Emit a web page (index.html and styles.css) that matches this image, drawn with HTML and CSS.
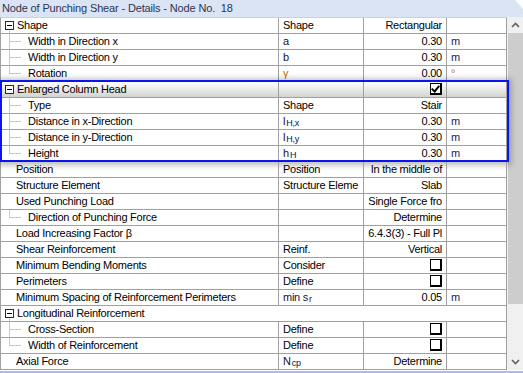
FILE: index.html
```html
<!DOCTYPE html>
<html>
<head>
<meta charset="utf-8">
<link rel="stylesheet" href="styles.css">
</head>
<body>
<div class="win">
  <div class="title">Node of Punching Shear - Details - Node No.&nbsp;&nbsp;18</div>
  <div class="main">
    <div class="grid">
      <div class="row">
        <div class="c1 group focus"><span class="exp"></span>Shape</div>
        <div class="c2">Shape</div><div class="c3">Rectangular</div><div class="c4"></div>
      </div>
      <div class="row">
        <div class="c1 child">Width in Direction x</div>
        <div class="c2 sym">a</div><div class="c3">0.30</div><div class="c4">m</div>
      </div>
      <div class="row">
        <div class="c1 child">Width in Direction y</div>
        <div class="c2 sym">b</div><div class="c3">0.30</div><div class="c4">m</div>
      </div>
      <div class="row">
        <div class="c1 child last">Rotation</div>
        <div class="c2 orange">γ</div><div class="c3">0.00</div><div class="c4 orange">°</div>
      </div>
      <div class="sel-group">
        <div class="row hl">
          <div class="c1 group"><span class="exp"></span>Enlarged Column Head</div>
          <div class="c2"></div><div class="c3"><span class="cb checked"></span></div><div class="c4"></div>
        </div>
        <div class="row">
          <div class="c1 child">Type</div>
          <div class="c2">Shape</div><div class="c3">Stair</div><div class="c4"></div>
        </div>
        <div class="row">
          <div class="c1 child">Distance in x-Direction</div>
          <div class="c2 sym">l<sub>H,x</sub></div><div class="c3">0.30</div><div class="c4">m</div>
        </div>
        <div class="row">
          <div class="c1 child">Distance in y-Direction</div>
          <div class="c2 sym">l<sub>H,y</sub></div><div class="c3">0.30</div><div class="c4">m</div>
        </div>
        <div class="row">
          <div class="c1 child last">Height</div>
          <div class="c2 sym">h<sub>H</sub></div><div class="c3">0.30</div><div class="c4">m</div>
        </div>
        <div class="sel-box"></div>
      </div>
      <div class="row">
        <div class="c1 top">Position</div>
        <div class="c2">Position</div><div class="c3">In the middle of</div><div class="c4"></div>
      </div>
      <div class="row">
        <div class="c1 top">Structure Element</div>
        <div class="c2">Structure Eleme</div><div class="c3">Slab</div><div class="c4"></div>
      </div>
      <div class="row">
        <div class="c1 top">Used Punching Load</div>
        <div class="c2"></div><div class="c3">Single Force fro</div><div class="c4"></div>
      </div>
      <div class="row">
        <div class="c1 child last">Direction of Punching Force</div>
        <div class="c2"></div><div class="c3">Determine</div><div class="c4"></div>
      </div>
      <div class="row">
        <div class="c1 top">Load Increasing Factor β</div>
        <div class="c2"></div><div class="c3">6.4.3(3) - Full Pl</div><div class="c4"></div>
      </div>
      <div class="row">
        <div class="c1 top">Shear Reinforcement</div>
        <div class="c2">Reinf.</div><div class="c3">Vertical</div><div class="c4"></div>
      </div>
      <div class="row">
        <div class="c1 top">Minimum Bending Moments</div>
        <div class="c2">Consider</div><div class="c3"><span class="cb"></span></div><div class="c4"></div>
      </div>
      <div class="row">
        <div class="c1 top">Perimeters</div>
        <div class="c2">Define</div><div class="c3"><span class="cb"></span></div><div class="c4"></div>
      </div>
      <div class="row">
        <div class="c1 top">Minimum Spacing of Reinforcement Perimeters</div>
        <div class="c2 sym">min s<sub>r</sub></div><div class="c3">0.05</div><div class="c4">m</div>
      </div>
      <div class="row span">
        <div class="c1 group"><span class="exp"></span>Longitudinal Reinforcement</div>
        <div class="cspan"></div>
      </div>
      <div class="row">
        <div class="c1 child">Cross-Section</div>
        <div class="c2">Define</div><div class="c3"><span class="cb"></span></div><div class="c4"></div>
      </div>
      <div class="row">
        <div class="c1 child last">Width of Reinforcement</div>
        <div class="c2">Define</div><div class="c3"><span class="cb"></span></div><div class="c4"></div>
      </div>
      <div class="row">
        <div class="c1 top">Axial Force</div>
        <div class="c2 sym">N<sub>cp</sub></div><div class="c3">Determine</div><div class="c4"></div>
      </div>
    </div>
    <div class="scroll">
      <div class="sbtn"><svg width="9" height="6" viewBox="0 0 9 6"><path d="M1 5 L4.5 1.5 L8 5" fill="none" stroke="#606060" stroke-width="1.6"/></svg></div>
      <div class="thumb"></div>
      <div class="track"></div>
      <div class="sbtn"><svg width="9" height="6" viewBox="0 0 9 6"><path d="M1 1 L4.5 4.5 L8 1" fill="none" stroke="#606060" stroke-width="1.6"/></svg></div>
    </div>
  </div>
  <div class="foot"></div>
</div>
</body>
</html>
```
FILE: styles.css
```css
* { box-sizing: border-box; }
html, body { margin: 0; padding: 0; background: #fff; }
body {
  font-family: "Liberation Sans", Arial, sans-serif;
  font-size: 11px;
  letter-spacing: -0.25px;
  color: #000;
}
.win { width: 523px; height: 373px; overflow: hidden; background: #fff; }
.title {
  height: 17px;
  line-height: 16px;
  padding-left: 2px;
  background: #dbe4f4;
  color: #2a3550;
  letter-spacing: -0.15px;
  clip-path: polygon(0 0, 515px 0, 523px 9px, 523px 100%, 0 100%);
  white-space: pre;
}
.main { display: flex; height: 353px; }
.grid {
  width: 507px;
  border-left: 1px solid #a0a0a0;
  border-top: 1px solid #d0d0d0;
  position: relative;
}
.row {
  display: grid;
  grid-template-columns: 278px 85px 83px 60px;
  height: 16px;
}
.row > div {
  border-right: 1px solid #a0a0a0;
  border-bottom: 1px solid #a0a0a0;
  height: 16px;
  line-height: 15px;
  white-space: nowrap;
  overflow: hidden;
  position: relative;
}
.row.span { grid-template-columns: 278px 228px; }
.row.span .c1 { border-right: none; }
.c1 { padding-left: 15px; }
.c2 { padding-left: 4px; }
.c3 { padding-right: 4px; text-align: right; }
.c4 { padding-left: 4px; color: #1a1a60; }
.sym { color: #101040; }
.orange { color: #c07020 !important; }
sub { font-size: 9px; vertical-align: -1px; line-height: 0; margin-left: 1px; }
.hl > div { background: linear-gradient(to bottom, #fcfcfc 0%, #ececec 45%, #d2d2d2 100%); }

.c1.group { padding-left: 4px; display: flex; align-items: center; }
.exp {
  width: 9px; height: 9px;
  border: 1px solid #2a2a2a;
  background: #fff;
  margin-right: 3px;
  position: relative;
  flex: none;
}
.exp::after {
  content: "";
  position: absolute;
  left: 1px; right: 1px; top: 3px;
  height: 1px;
  background: #000;
}
.c1.group::after {
  content: "";
  position: absolute;
  left: 8px; top: 12px; bottom: -1px;
  width: 1px;
  background: #c8c8c8;
}
.c1.child { padding-left: 27px; }
.c1.child::before {
  content: "";
  position: absolute;
  left: 8px; top: -1px; bottom: -1px;
  width: 1px;
  background: #c8c8c8;
}
.c1.child.last::before { bottom: 8px; }
.c1.child::after {
  content: "";
  position: absolute;
  left: 8px; top: 7px;
  width: 12px; height: 1px;
  background: #c8c8c8;
}
.focus::before {
  content: "";
  position: absolute;
  left: -1px; top: -1px; right: -1px; bottom: -1px;
  border: 1px dotted #000;
  pointer-events: none;
}
.cb {
  display: inline-block;
  width: 12px; height: 12px;
  border: 1px solid #000;
  border-right-width: 2px;
  border-bottom-width: 2px;
  background: #fff;
  vertical-align: -2px;
  position: relative;
}
.cb.checked::after {
  content: "";
  position: absolute;
  left: 2px; top: 0px;
  width: 3px; height: 6px;
  border: solid #000;
  border-width: 0 2px 2px 0;
  transform: rotate(40deg);
}
.sel-group { position: relative; }
.sel-box {
  position: absolute;
  left: -1px; top: -2px;
  width: 509px; height: 82px;
  border: 2px solid #0a14f0;
  box-shadow: 0 1px 6px 2px rgba(0,0,0,0.28);
  pointer-events: none;
}
.scroll {
  width: 16px;
  display: flex;
  flex-direction: column;
  background: #f0f0f0;
}
.sbtn { height: 16px; display: flex; align-items: center; justify-content: center; }
.thumb { height: 271px; background: #cdcdcd; margin-left: 1px; }
.track { flex: 1; }
.foot { height: 3px; border-top: 1px solid #fff; background: #b0b8f2; }
```
